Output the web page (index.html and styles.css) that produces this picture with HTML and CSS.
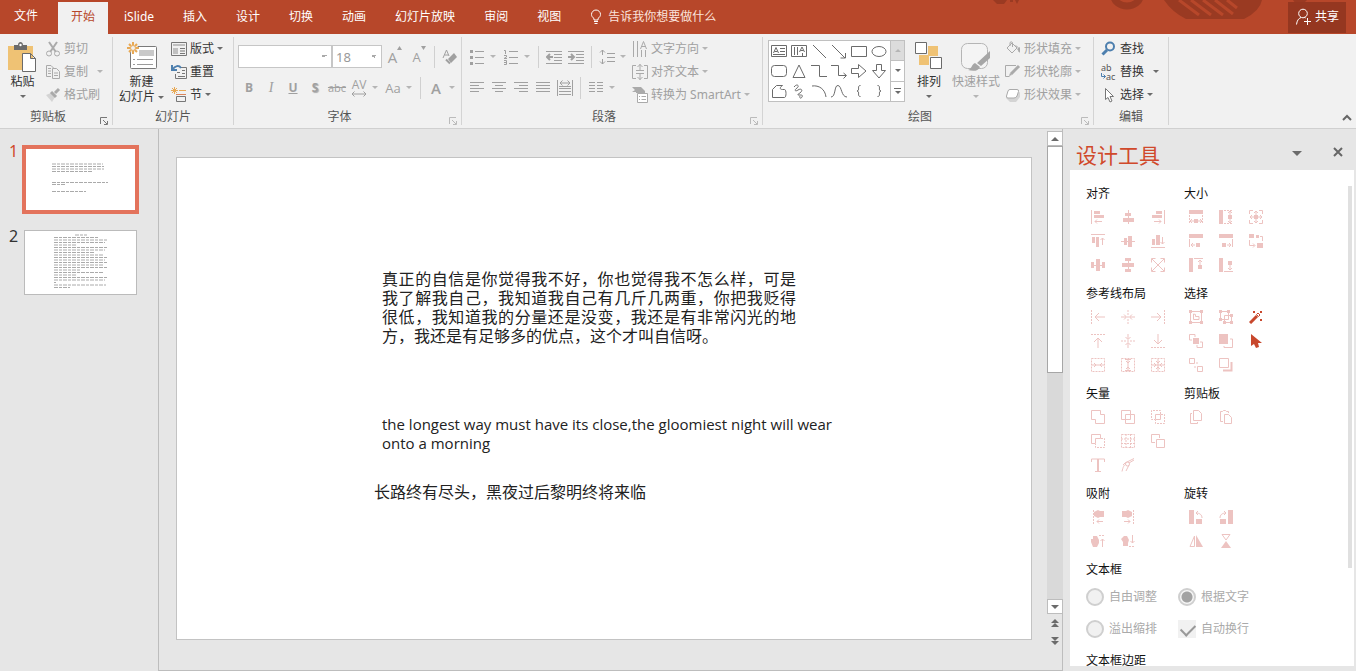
FILE: index.html
```html
<!DOCTYPE html>
<html lang="zh-CN">

<head>
    <meta charset="UTF-8">
    <meta name="viewport" content="width=device-width, initial-scale=1.0">
    <title>设计工具</title>
    <link rel="stylesheet" href="styles.css">
</head>

<body>
    <!-- Title tabs -->
    <header class="topbar">
        <svg class="topbar-art" width="320" height="20" viewBox="0 0 320 20" aria-hidden="true">
            <path d="M0 0h14l-3 4H4zM17 0h3v2h-3zM22 0h4l-2 4z" />
            <path class="ring" d="M121 -4a13 10 0 0 0 26 0" />
            <path d="M171 0q8 12 22 19h58q16-8 18-19z" />
            <path class="stripes" d="M186 0l20 15M198 0l20 15M210 0l20 15M222 0l18 14M234 0l10 8" />
            <path d="M300 0h14l-8 8z" />
        </svg>
        <nav class="tabs">
            <a class="tab file" href="#">文件</a>
            <a class="tab active" href="#">开始</a>
            <a class="tab" href="#">iSlide</a>
            <a class="tab" href="#">插入</a>
            <a class="tab" href="#">设计</a>
            <a class="tab" href="#">切换</a>
            <a class="tab" href="#">动画</a>
            <a class="tab" href="#">幻灯片放映</a>
            <a class="tab" href="#">审阅</a>
            <a class="tab" href="#">视图</a>
        </nav>
        <button class="tell-me">
            <svg width="12" height="16" viewBox="0 0 12 16"><path d="M4 11V9.500C2.500 8.500 1.500 7 1.500 5.500a4.500 4.500 0 0 1 9 0C10.500 7 9.500 8.500 8 9.500V11zM4 12.500h4M4.500 14.500h3" /></svg>
            告诉我你想要做什么
        </button>
        <button class="share">
            <svg width="17" height="18" viewBox="0 0 17 18"><path d="M1.500 16.500c.5-4 2-6 4.500-7M10.500 10c-.5-.5-1-.7-1.500-1M12.500 10v7M9 13.500h7" /><circle cx="8" cy="5.500" r="4.300" /></svg>
            共享
        </button>
    </header>

    <!-- Ribbon -->
    <div class="ribbon">
        <section class="group g-clipboard">
            <div class="group-body">
                <button class="big">
                    <svg width="29" height="32" viewBox="0 0 29 32">
                        <path fill="#efc274" d="M0 5h25v24H0z" />
                        <path fill="#6b6b6b" d="M6 4h4c0-4 5-4 5 0h4v5H6z" />
                        <path fill="#fff" stroke="#6b6b6b" d="M14.500 12.500h8l5 5v13h-13zM22.500 12.500v5h5" />
                        <circle cx="12.500" cy="4" r="1.200" fill="#fff" />
                    </svg>
                    <span>粘贴</span>
                    <i class="arrow"></i>
                </button>
                <div class="col">
                    <button class="small" disabled>
                        <svg viewBox="0 0 16 16"><path d="M4 1l6.500 9.500M12 1L5.500 10.500" stroke-width="2" /><circle cx="4" cy="12.500" r="2.500" /><circle cx="12" cy="12.500" r="2.500" /></svg>
                        剪切
                    </button>
                    <button class="small" disabled>
                        <svg viewBox="0 0 16 16"><path d="M6 12.500H1.500v-11H6L8.500 4M3 4.500h3M3 7h3M3 9.500h3M7.500 4.500h4l3 3v7h-7zM9 9h4M9 11.500h4" /></svg>
                        复制<i class="arrow wide"></i>
                    </button>
                    <button class="small" disabled>
                        <svg viewBox="0 0 16 16"><path class="f soft" d="M1 8l5-2 4 4-3 5z" /><path d="M6 5l5 5" stroke-width="3" /><path d="M10 6l4-4" stroke-width="3" /></svg>
                        格式刷
                    </button>
                </div>
            </div>
            <div class="group-foot"><span>剪贴板</span><button class="launcher" aria-label="剪贴板选项"><svg width="8" height="8" viewBox="0 0 8 8"><path d="M.5 7V.5H7M3 3l4 4M7.500 4v3.500H4" /></svg></button></div>
        </section>

        <section class="group g-slides">
            <div class="group-body">
                <button class="big">
                    <svg width="32" height="32" viewBox="0 0 32 32">
                        <rect x="4.500" y="5.500" width="26" height="22" rx="1" fill="#fff" stroke="#7a7a7a" />
                        <path fill="#c9c9c9" d="M13 9h15v6H13z" />
                        <path stroke="#9a9a9a" d="M7 18.500h2M11 18.500h16M7 23.500h2M11 23.500h16" />
                        <circle cx="7" cy="7" r="5" fill="#f1f1f1" />
                        <path stroke="#e8a955" stroke-width="2" d="M7 1v3M7 10v3M1 7h3M10 7h3M3 3l2 2M9 9l2 2M11 3L9 5M5 9l-2 2" />
                        <circle cx="7" cy="7" r="2.500" stroke="#e8a955" />
                    </svg>
                    <span>新建</span>
                    <span>幻灯片<i class="arrow"></i></span>
                </button>
                <div class="col">
                    <button class="small">
                        <svg viewBox="0 0 16 16"><path d="M.5 1.500h15v13H.5z" /><path class="f soft" d="M2 3h12v2H2zM2 7h5v6H2z" /><path d="M9 7.500h5M9 10h5M9 12.500h5" /></svg>
                        版式<i class="arrow"></i>
                    </button>
                    <button class="small">
                        <svg viewBox="0 0 16 16"><path d="M9 3.500h6.500v11h-11V10M6 8.500h3M11 6.500h3M11 9.500h3M7 12.500h7" /><path stroke="#4d7fae" stroke-width="2" d="M1 1v5h5M1.500 5.500C4 1.500 8 1 10 4" /></svg>
                        重置
                    </button>
                    <button class="small">
                        <svg viewBox="0 0 16 16"><path stroke="#e8a955" d="M3.500 0v7M0 3.500h7M1 1l5 5M6 1L1 6M8 3.500h7" /><path stroke="#d9845c" d="M5 7.500h10" /><path d="M5.500 9.500h9v5h-9z" /></svg>
                        节<i class="arrow"></i>
                    </button>
                </div>
            </div>
            <div class="group-foot"><span>幻灯片</span></div>
        </section>

        <section class="group g-font">
            <div class="group-body rows">
                <div class="row">
                    <select class="combo font-name" aria-label="字体" disabled><option></option></select>
                    <select class="combo font-size" aria-label="字号" disabled><option>18</option></select>
                    <button class="tool grow" aria-label="增大字号" disabled>A<svg width="5" height="4" viewBox="0 0 5 4"><path class="f" d="M0 4l2.500-4L5 4z" /></svg></button>
                    <button class="tool shrink" aria-label="减小字号" disabled>A<svg width="5" height="4" viewBox="0 0 5 4"><path class="f" d="M0 0l2.500 4L5 0z" /></svg></button>
                    <i class="bar"></i>
                    <button class="tool" aria-label="清除格式" disabled><svg width="16" height="16" viewBox="0 0 16 16"><path d="M1 9L4.500 1 7 7M2.500 6h4" /><path class="f" d="M6 10l6-6 3 4-6 6z" /><path d="M4 10.500l4 4" stroke-width="2" /></svg></button>
                </div>
                <div class="row">
                    <button class="tool b" disabled>B</button>
                    <button class="tool it" disabled>I</button>
                    <button class="tool u" disabled>U</button>
                    <button class="tool sh" disabled>S</button>
                    <button class="tool st" disabled>abc</button>
                    <button class="tool av" disabled><span>AV</span><svg width="16" height="6" viewBox="0 0 16 6"><path d="M1 3h14M3.500.5L1 3l2.500 2.500M12.500.5L15 3l-2.500 2.500" /></svg></button><i class="arrow"></i>
                    <button class="tool case" disabled>Aa</button><i class="arrow"></i>
                    <i class="bar"></i>
                    <button class="tool color" disabled>A</button><i class="arrow"></i>
                </div>
            </div>
            <div class="group-foot dim"><span>字体</span><button class="launcher" aria-label="字体选项"><svg width="8" height="8" viewBox="0 0 8 8"><path d="M.5 7V.5H7M3 3l4 4M7.500 4v3.500H4" /></svg></button></div>
        </section>

        <section class="group g-para">
            <div class="group-body">
                <div class="rows">
                    <div class="row">
                        <button class="tool" aria-label="项目符号" disabled><svg width="16" height="16" viewBox="0 0 16 16"><path class="f" d="M1 1h3v3H1zM1 7h3v3H1zM1 13h3v3H1z" /><path d="M6 2.500h9M6 8.500h9M6 14.500h9" /></svg></button><i class="arrow"></i>
                        <button class="tool" aria-label="编号" disabled><svg width="16" height="16" viewBox="0 0 16 16"><path d="M1 1.500h1.500V5M1 6.500h2.500v1.500L1 9.500h3M1 11.500h2.500v4H1M1 13.500h2M6 2.500h9M6 8.500h9M6 14.500h9" /></svg></button><i class="arrow"></i>
                        <i class="bar"></i>
                        <button class="tool" aria-label="减少缩进" disabled><svg width="16" height="16" viewBox="0 0 16 16"><path d="M0 2.500h16M8 5.500h8M8 8.500h8M8 11.500h8M0 14.500h16" /><path d="M7 8H1M4 5L1 8l3 3" stroke-width="2" /></svg></button>
                        <button class="tool" aria-label="增加缩进" disabled><svg width="16" height="16" viewBox="0 0 16 16"><path d="M0 2.500h16M8 5.500h8M8 8.500h8M8 11.500h8M0 14.500h16" /><path d="M0 8h6M3 5l3 3-3 3" stroke-width="2" /></svg></button>
                        <i class="bar"></i>
                        <button class="tool" aria-label="行距" disabled><svg width="16" height="16" viewBox="0 0 16 16"><path d="M3.500 1v5M1 3.500L3.500 1 6 3.500M3.500 10v5M1 12.500L3.500 15 6 12.500M8 4.500h8M8 8.500h8M8 12.500h8" /></svg></button><i class="arrow"></i>
                    </div>
                    <div class="row">
                        <button class="tool" aria-label="左对齐" disabled><svg width="16" height="14" viewBox="0 0 16 14"><path d="M1 1.500h14M1 4.500h9M1 7.500h14M1 10.500h9" /></svg></button>
                        <button class="tool" aria-label="居中" disabled><svg width="16" height="14" viewBox="0 0 16 14"><path d="M1 1.500h14M4 4.500h8M1 7.500h14M4 10.500h8" /></svg></button>
                        <button class="tool" aria-label="右对齐" disabled><svg width="16" height="14" viewBox="0 0 16 14"><path d="M1 1.500h14M6 4.500h9M1 7.500h14M6 10.500h9" /></svg></button>
                        <button class="tool" aria-label="两端对齐" disabled><svg width="16" height="14" viewBox="0 0 16 14"><path d="M1 1.500h14M1 4.500h14M1 7.500h14M1 10.500h14" /></svg></button>
                        <button class="tool" aria-label="分散对齐" disabled><svg width="16" height="16" viewBox="0 0 16 16"><path d="M.5 0v16M15.500 0v16M3 3h10M5.500.5L3 3l2.500 2.500M10.500.5L13 3l-2.500 2.500M2 6.500h12M2 8.500h12M2 11.500h12M2 14.500h12" /></svg></button>
                        <i class="bar"></i>
                        <button class="tool" aria-label="分栏" disabled><svg width="16" height="14" viewBox="0 0 16 14"><path d="M1 1.500h6M9 1.500h6M1 4.500h6M9 4.500h6M1 7.500h6M9 7.500h6M1 10.500h6M9 10.500h6" /></svg></button><i class="arrow"></i>
                    </div>
                </div>
                <div class="col">
                    <button class="small" disabled>
                        <svg viewBox="0 0 16 16"><path d="M1.500 0v16M5.500 0v16M9.500 9v7M13.500 9v7M8.500 8L11.500.5 14.500 8M9.500 5.500h4" /></svg>
                        文字方向<i class="arrow"></i>
                    </button>
                    <button class="small" disabled>
                        <svg viewBox="0 0 16 16"><path d="M4 1.500H.5v13H4M12 1.500h3.500v13H12M8 0v6M5.500 3L8 .5 10.500 3M8 10v6M5.500 13L8 15.500l2.500-2.500M4 6.500h8M4 9.500h8" /></svg>
                        对齐文本<i class="arrow"></i>
                    </button>
                    <button class="small" disabled>
                        <svg viewBox="0 0 16 16"><path class="f" d="M0 0h9l4 4v2H4V5H0l3-2z" /><path class="w" d="M5.500 6.500h10v9h-10z" /><path d="M7 9.500h1M9.500 9.500H14M7 12.500h1M9.500 12.500H14" /></svg>
                        转换为 SmartArt<i class="arrow"></i>
                    </button>
                </div>
            </div>
            <div class="group-foot dim"><span>段落</span><button class="launcher" aria-label="段落选项"><svg width="8" height="8" viewBox="0 0 8 8"><path d="M.5 7V.5H7M3 3l4 4M7.500 4v3.500H4" /></svg></button></div>
        </section>

        <section class="group g-draw">
            <div class="group-body">
                <div class="gallery">
                    <div class="shapes">
                        <button aria-label="文本框"><svg viewBox="0 0 16 16"><path d="M.5 2.500h15v11H.5zM2.500 10L5 4.500 7.500 10M3.500 8.500h3M9 5.500h5M9 8.500h5M2 11.500h12" /></svg></button>
                        <button aria-label="竖排文本框"><svg viewBox="0 0 16 16"><path d="M.5 2.500h15v11H.5zM3.500 4v8M6.500 4v8M8.500 9L11 4l2.500 5M9.500 7.500h3M11.500 10v3" /></svg></button>
                        <button aria-label="直线"><svg viewBox="0 0 16 16"><path d="M2 2l13 13" /></svg></button>
                        <button aria-label="箭头"><svg viewBox="0 0 16 16"><path d="M1 2l13 13M14.500 10v5h-5" /></svg></button>
                        <button aria-label="矩形"><svg viewBox="0 0 16 16"><path d="M.5 3.500h15v10H.5z" /></svg></button>
                        <button aria-label="椭圆"><svg viewBox="0 0 16 16"><ellipse cx="8" cy="8.500" rx="7" ry="5" /></svg></button>
                        <button aria-label="圆角矩形"><svg viewBox="0 0 16 16"><rect x=".5" y="2.500" width="15" height="11" rx="3" /></svg></button>
                        <button aria-label="三角形"><svg viewBox="0 0 16 16"><path d="M8 2L2 14.500h12z" /></svg></button>
                        <button aria-label="肘形"><svg viewBox="0 0 16 16"><path d="M0 2.500h8.500v11H16" /></svg></button>
                        <button aria-label="肘形箭头"><svg viewBox="0 0 16 16"><path d="M0 2.500h7.500v10H15M12.500 10l3 2.500-3 3" /></svg></button>
                        <button aria-label="右箭头"><svg viewBox="0 0 16 16"><path d="M.5 5.500h7V1.500L15 8l-7.500 6.500v-4h-7z" /></svg></button>
                        <button aria-label="下箭头"><svg viewBox="0 0 16 16"><path d="M5.500 1.500h5v6h4L8 15 1.500 7.500h4z" /></svg></button>
                        <button aria-label="任意多边形"><svg viewBox="0 0 16 16"><path d="M1.500 14.500V6.500l4-4h6c-3 2-3 4 0 4h2c2 0 2 8 0 8z" /></svg></button>
                        <button aria-label="曲线笔"><svg viewBox="0 0 16 16"><path d="M3 4c3-4 6-1 3 1S4 9 7 7s5 0 3 2-5 3-2 3 4 0 3 2-3 1-2-1" /></svg></button>
                        <button aria-label="弧形"><svg viewBox="0 0 16 16"><path d="M1 3c7-1 13 3 14 11" /></svg></button>
                        <button aria-label="曲线"><svg viewBox="0 0 16 16"><path d="M0 14C5 14 3 2 7 2.500S10 14 16 14" /></svg></button>
                        <button aria-label="左大括号"><svg viewBox="0 0 16 16"><path d="M9.500 2.500c-4 0 0 5-3.500 5.500 3.500.5-.5 5.500 3.500 5.500" /></svg></button>
                        <button aria-label="右大括号"><svg viewBox="0 0 16 16"><path d="M6.500 2.500c4 0 0 5 3.500 5.500-3.500.5.500 5.500-3.500 5.500" /></svg></button>
                    </div>
                    <div class="gallery-nav">
                        <button aria-label="上一行" disabled><i class="arrow up"></i></button>
                        <button aria-label="下一行"><i class="arrow"></i></button>
                        <button class="more" aria-label="更多"><i class="arrow"></i></button>
                    </div>
                </div>
                <button class="big arrange">
                    <svg width="28" height="32" viewBox="0 0 28 32">
                        <path fill="#efc274" d="M13 5h10v10H13zM4 14h10v10H4z" />
                        <path fill="#fff" stroke="#6b6b6b" d="M.5 1.500h11v11H.5zM15.500 16.500h11v11h-11z" />
                    </svg>
                    <span>排列</span>
                    <i class="arrow"></i>
                </button>
                <button class="big" disabled>
                    <svg width="30" height="32" viewBox="0 0 30 32">
                        <rect x=".5" y="2.500" width="26" height="25" rx="6" fill="#f4f4f4" stroke="#b5b5b5" />
                        <path fill="#a6a6a6" d="M29 10v7l-9 8-4-3zM14 22l5 4c-2 5-8 4-12 3 4-1 3-5 7-7z" />
                    </svg>
                    <span>快速样式</span>
                    <i class="arrow"></i>
                </button>
                <div class="col">
                    <button class="small" disabled>
                        <svg viewBox="0 0 16 16"><path d="M2 7l5-5 5 5-5 5zM5 5V1.500Q6 0 7.500 1.500V6M10 5c3 0 4 2 4 6" /><path class="f" d="M12 8l3-2v6z" /></svg>
                        形状填充<i class="arrow"></i>
                    </button>
                    <button class="small" disabled>
                        <svg viewBox="0 0 16 16"><path d="M11 1.500H.5v11h4" /><path d="M14 2L6 10" stroke-width="3" /><path class="f" d="M5 9l2 2-3 1z" /></svg>
                        形状轮廓<i class="arrow"></i>
                    </button>
                    <button class="small" disabled>
                        <svg viewBox="0 0 16 16"><path class="f soft" d="M1 11l4 4h6l4-5V5z" /><path class="w" d="M5 2.500h7q2 0 1.500 2L12 9q-1 2-3 2H3q-2 0-1.500-2L3 4q.5-1.500 2-1.500z" /></svg>
                        形状效果<i class="arrow"></i>
                    </button>
                </div>
            </div>
            <div class="group-foot dim"><span>绘图</span><button class="launcher" aria-label="绘图选项"><svg width="8" height="8" viewBox="0 0 8 8"><path d="M.5 7V.5H7M3 3l4 4M7.500 4v3.500H4" /></svg></button></div>
        </section>

        <section class="group g-edit">
            <div class="group-body">
                <div class="col">
                    <button class="small">
                        <svg viewBox="0 0 16 16"><circle cx="9" cy="5.500" r="4" stroke="#4d7fae" stroke-width="2" /><path stroke="#4d7fae" stroke-width="3" d="M6 9l-4.500 4.500" /></svg>
                        查找
                    </button>
                    <button class="small">
                        <span class="replace-icon">
                            <span>ab</span>
                            <span><svg width="5" height="6" viewBox="0 0 5 6"><path stroke="#4d7fae" d="M.5 0v3.500h4M2.500 1.500l2 2-2 2" /></svg>ac</span>
                        </span>
                        替换<i class="arrow wide"></i>
                    </button>
                    <button class="small">
                        <svg viewBox="0 0 16 16"><path class="w" d="M4.500 1.500v11l2.500-2 2 4.500 2-1-2-4.500h3.500z" /></svg>
                        选择<i class="arrow"></i>
                    </button>
                </div>
            </div>
            <div class="group-foot"><span>编辑</span></div>
        </section>
        <button class="collapse" aria-label="折叠功能区"><svg width="10" height="7" viewBox="0 0 10 7"><path d="M1 6l4-4 4 4" /></svg></button>
    </div>

    <main class="workspace">
        <!-- Slide thumbnails -->
        <aside class="thumbs">
            <a class="thumb active" href="#slide">
                <span>1</span>
                <svg viewBox="0 0 109 61">
                    <path d="M26 15h51M26 17.500h52M26 20h52M26 22.500h41M26 33.500h56M26 35.500h14M26 42.500h34" />
                </svg>
            </a>
            <a class="thumb" href="#slide">
                <span>2</span>
                <svg viewBox="0 0 111 63">
                    <path d="M50 4h12M29 6.500h44M29 9h53M29 11.500h51M29 14h22M29 16.500h53M29 19h51M29 21.500h40M29 24h50M29 26.500h53M29 29h51M29 31.500h53M29 34h49M29 36.500h53M29 39h27M29 41.500h50M29 44h22M29 46.500h53M29 49h51M29 51.500h2M29 54h52M29 56.500h16" />
                </svg>
            </a>
        </aside>

        <!-- Editing area -->
        <div class="canvas">
            <article class="slide" id="slide">
                <p class="quote">真正的自信是你觉得我不好，你也觉得我不怎么样，可是我了解我自己，我知道我自己有几斤几两重，你把我贬得很低，我知道我的分量还是没变，我还是有非常闪光的地方，我还是有足够多的优点，这个才叫自信呀。</p>
                <p class="english">the longest way must have its close,the gloomiest night will wear onto a morning</p>
                <p class="chinese">长路终有尽头，黑夜过后黎明终将来临</p>
            </article>
            <div class="scroll">
                <button aria-label="向上滚动"><i class="arrow up"></i></button>
                <div class="track"><div class="handle"></div></div>
                <button aria-label="向下滚动"><i class="arrow"></i></button>
                <button class="jump" aria-label="上一张幻灯片"><svg width="8" height="8" viewBox="0 0 8 8"><path d="M0 4l4-4 4 4zM0 8l4-4 4 4z" /></svg></button>
                <button class="jump" aria-label="下一张幻灯片"><svg width="8" height="8" viewBox="0 0 8 8"><path d="M0 0h8L4 4zM0 4h8L4 8z" /></svg></button>
            </div>
        </div>

        <!-- Design tools -->
        <aside class="pane">
            <div class="pane-head">
                <h1>设计工具</h1>
                <button aria-label="任务窗格选项"><i class="arrow large"></i></button>
                <button aria-label="关闭"><svg width="10" height="10" viewBox="0 0 10 10"><path d="M1 1l8 8M9 1L1 9" /></svg></button>
            </div>
            <div class="pane-body">
                <div class="pane-content">
                    <div class="sets">
                        <section class="set">
                            <h2>对齐</h2>
                            <div class="icons">
                                <button aria-label="左对齐" disabled><svg viewBox="0 0 14 14"><path class="f" d="M3 1h6v3H3zM3 5h10v3H3z" /><path d="M.5 0v14M11 11.500H4M6 9.500l-2 2 2 2" /></svg></button>
                                <button aria-label="水平居中" disabled><svg viewBox="0 0 14 14"><path class="f" d="M4 3h6v3H4zM2 8h11v4H2z" /><path d="M7.500 0v14" /></svg></button>
                                <button aria-label="右对齐" disabled><svg viewBox="0 0 14 14"><path class="f" d="M5 1h6v3H5zM1 5h10v3H1z" /><path d="M13.500 0v14M3 11.500h7M8 9.500l2 2-2 2" /></svg></button>
                                <button aria-label="顶端对齐" disabled><svg viewBox="0 0 14 14"><path class="f" d="M1 3h3v6H1zM5 3h3v10H5z" /><path d="M0 .5h14M11.500 11V4M9.500 6l2-2 2 2" /></svg></button>
                                <button aria-label="垂直居中" disabled><svg viewBox="0 0 14 14"><path class="f" d="M3 4h3v7H3zM7 2h4v11H7z" /><path d="M0 7.500h14" /></svg></button>
                                <button aria-label="底端对齐" disabled><svg viewBox="0 0 14 14"><path class="f" d="M1 5h3v6H1zM5 1h4v10H5z" /><path d="M0 13.500h14M11.500 3v7M9.500 8l2 2 2-2" /></svg></button>
                                <button aria-label="横向分布" disabled><svg viewBox="0 0 14 14"><path class="f" d="M0 4h3v6H0zM5 1h4v12H5zM11 4h3v6h-3z" /><path d="M0 7.500h14" /></svg></button>
                                <button aria-label="纵向分布" disabled><svg viewBox="0 0 14 14"><path class="f" d="M4 0h6v3H4zM1 5h12v4H1zM4 11h6v3H4z" /><path d="M7.500 0v14" /></svg></button>
                                <button aria-label="铺满" disabled><svg viewBox="0 0 14 14"><path d="M1 1l12 12M13 1L1 13M.5 4.500v-4h4M9.500.5h4v4M13.500 9.500v4h-4M4.500 13.500h-4v-4" /></svg></button>
                            </div>
                        </section>
                        <section class="set">
                            <h2>大小</h2>
                            <div class="icons">
                                <button aria-label="等宽" disabled><svg viewBox="0 0 14 14"><path class="f" d="M0 0h14v4H0zM5 9h4v4H5z" /><path class="d" d="M.5 5v8M13.500 5v8" /><path d="M5 11H1M3 9l-2 2 2 2M9 11h4M11 9l2 2-2 2" /></svg></button>
                                <button aria-label="等高" disabled><svg viewBox="0 0 14 14"><path class="f" d="M0 0h4v14H0zM9 5h4v4H9z" /><path class="d" d="M5 .5h9M5 13.500h9" /><path d="M11 5V1M9 3l2-2 2 2M11 9v4M9 11l2 2 2-2" /></svg></button>
                                <button aria-label="等大小" disabled><svg viewBox="0 0 14 14"><path d="M.5 4V.5H4M10 .5h3.500V4M13.500 10v3.500H10M4 13.500H.5V10M1 7h12M7 1v12M3 5L1 7l2 2M11 5l2 2-2 2M5 3l2-2 2 2M5 11l2 2 2-2" /><path class="f" d="M5 5h4v4H5z" /></svg></button>
                                <button aria-label="向左等宽" disabled><svg viewBox="0 0 14 14"><path class="f" d="M0 0h14v4H0zM7 9h4v4H7z" /><path d="M.5 5v8M6 11H2M4 9l-2 2 2 2" /></svg></button>
                                <button aria-label="向右等宽" disabled><svg viewBox="0 0 14 14"><path class="f" d="M0 0h14v4H0zM3 9h4v4H3z" /><path d="M13.500 5v8M8 11h4M10 9l2 2-2 2" /></svg></button>
                                <button aria-label="交换" disabled><svg viewBox="0 0 14 14"><path class="f" d="M0 0h5v4H0zM8 9h6v5H8zM7 1h3v3H7z" /><path d="M.5 6v5.500h5M4 9.500l2 2-2 2M11 2.500h2.500V7" /></svg></button>
                                <button aria-label="向上等高" disabled><svg viewBox="0 0 14 14"><path class="f" d="M0 0h4v14H0zM9 7h4v4H9z" /><path d="M5 .5h9M11 7V2M9 4l2-2 2 2" /></svg></button>
                                <button aria-label="向下等高" disabled><svg viewBox="0 0 14 14"><path class="f" d="M0 0h4v14H0zM9 3h4v4H9z" /><path d="M5 13.500h9M11 7v5M9 10l2 2 2-2" /></svg></button>
                            </div>
                        </section>
                        <section class="set">
                            <h2>参考线布局</h2>
                            <div class="icons">
                                <button aria-label="左参考线" disabled><svg viewBox="0 0 14 14"><path d="M14 7H4M8 3L4 7l4 4" /><path class="d" d="M.5 0v14" /></svg></button>
                                <button aria-label="垂直中线" disabled><svg viewBox="0 0 14 14"><path d="M0 7h5M3 4.500L5.500 7 3 9.500M14 7H9M11 4.500L8.500 7 11 9.500" /><path class="d" d="M7 0v14" /></svg></button>
                                <button aria-label="右参考线" disabled><svg viewBox="0 0 14 14"><path d="M0 7h10M6 3l4 4-4 4" /><path class="d" d="M13.500 0v14" /></svg></button>
                                <button aria-label="上参考线" disabled><svg viewBox="0 0 14 14"><path d="M7 14V4M3 8l4-4 4 4" /><path class="d" d="M0 .5h14" /></svg></button>
                                <button aria-label="水平中线" disabled><svg viewBox="0 0 14 14"><path d="M7 0v5M4.500 3L7 5.500 9.500 3M7 14V9M4.500 11L7 8.500 9.500 11" /><path class="d" d="M0 7h14" /></svg></button>
                                <button aria-label="下参考线" disabled><svg viewBox="0 0 14 14"><path d="M7 0v10M3 6l4 4 4-4" /><path class="d" d="M0 13.500h14" /></svg></button>
                                <button aria-label="左右边距" disabled><svg viewBox="0 0 14 14"><path class="d" d="M.5.5h13v13H.5z" /><path d="M1 7h12M3 5l2 2-2 2M11 5L9 7l2 2" /></svg></button>
                                <button aria-label="上下边距" disabled><svg viewBox="0 0 14 14"><path class="d" d="M.5.5h13v13H.5z" /><path d="M7 1v12M5 3l2 2 2-2M5 11l2-2 2 2M4 1.500h6M4 12.500h6" /></svg></button>
                                <button aria-label="四周边距" disabled><svg viewBox="0 0 14 14"><path class="d" d="M.5.500h13v13H.5z" /><path d="M1 7h12M7 1v12M5 3l2 2 2-2M5 11l2-2 2 2M3 5l2 2-2 2M11 5L9 7l2 2" /></svg></button>
                            </div>
                        </section>
                        <section class="set">
                            <h2>选择</h2>
                            <div class="icons">
                                <button aria-label="组合" disabled><svg viewBox="0 0 14 14"><path d="M1.500 1.500h11v11h-11zM4.500 4v5.500H10V6.500H6.500V4.500z" /><path class="f" d="M0 0h3v3H0zM11 0h3v3h-3zM0 11h3v3H0zM11 11h3v3h-3z" /></svg></button>
                                <button aria-label="取消组合" disabled><svg viewBox="0 0 14 14"><path d="M1.500 1.500h8v8h-8zM5.500 5.500h7v7h-7z" /><path class="f" d="M0 0h3v3H0zM8 0h3v3H8zM0 8h3v3H0zM11 4h3v3h-3zM4 11h3v3H4zM11 11h3v3h-3z" /></svg></button>
                                <button class="live" aria-label="魔棒"><svg viewBox="0 0 14 14"><path stroke-width="3" d="M1 13l7-7" /><path d="M7.500 4.500l2 2L11 5 9 3zM4 1l2 2M6 1L4 3M11 1l2 2M13 1l-2 2M11 9l2 2M13 9l-2 2" /></svg></button>
                                <button aria-label="上移一层" disabled><svg viewBox="0 0 14 14"><path class="f" d="M4 4h6v6H4z" /><path d="M3 6H.5V.5H6V3M11 8h2.500v5.500H8V11" /></svg></button>
                                <button aria-label="置于顶层" disabled><svg viewBox="0 0 14 14"><path class="f" d="M0 0h9v10H0z" /><path d="M11 5h2.500v8.500H5V12" /></svg></button>
                                <button class="live" aria-label="选择"><svg viewBox="0 0 14 14"><path class="f" d="M2 0v12l3-2 2 4 3-1-1-4h4z" /></svg></button>
                                <button aria-label="下移一层" disabled><svg viewBox="0 0 14 14"><path d="M.5.500h5v5h-5zM8.500 8.500h5v5h-5zM8 4v2M5 9h2" /></svg></button>
                                <button aria-label="置于底层" disabled><svg viewBox="0 0 14 14"><path d="M.5.500h9v9h-9z" /><path d="M12.500 4v8.500H4" stroke-width="2" /></svg></button>
                            </div>
                        </section>
                        <section class="set">
                            <h2>矢量</h2>
                            <div class="icons">
                                <button aria-label="联合" disabled><svg viewBox="0 0 14 14"><path d="M.5.500h9v4h4v9h-9v-4h-4z" /></svg></button>
                                <button aria-label="组合形状" disabled><svg viewBox="0 0 14 14"><path d="M.5.500h9v9h-9zM4.500 4.500h9v9h-9z" /></svg></button>
                                <button aria-label="相交" disabled><svg viewBox="0 0 14 14"><path d="M4.500 4.500h5v5h-5z" /><path class="d" d="M9.500 4V.5h-9v9H4M10 4.500h3.500v9h-9V10" /></svg></button>
                                <button aria-label="剪除" disabled><svg viewBox="0 0 14 14"><path d="M9.500 4.500v-4h-9v9h4v-5z" /><path class="d" d="M10 4.500h3.500v9h-9V10" /></svg></button>
                                <button aria-label="拆分" disabled><svg viewBox="0 0 14 14"><path class="d" d="M.5.500h13v13H.5zM5 0v14M9.500 0v14M0 5h14M0 9.500h14" /></svg></button>
                                <button aria-label="反向剪除" disabled><svg viewBox="0 0 14 14"><path d="M5.500 5.500h8v8h-8zM4 8.500H.5v-8h8V4" /></svg></button>
                                <button aria-label="文字矢量化" disabled><svg viewBox="0 0 14 14"><path d="M.5 4V1h13v3M4 13.500h6" /><path stroke-width="2" d="M7 1v12" /></svg></button>
                                <button aria-label="编辑顶点" disabled><svg viewBox="0 0 14 14"><path d="M1 13.500C2 9 3 7 5 6M8 5l5-3M2 7l2-2 9-4.500M5 13l3-6" /><circle cx="6.500" cy="6" r="2" /></svg></button>
                            </div>
                        </section>
                        <section class="set">
                            <h2>剪贴板</h2>
                            <div class="icons">
                                <button aria-label="复制" disabled><svg viewBox="0 0 14 14"><path d="M4.500.500h5l3 3v7h-8z" /><path d="M3 3.500H1.500v10h7V12" /></svg></button>
                                <button aria-label="粘贴" disabled><svg viewBox="0 0 14 14"><path d="M5.500 4.500h4l3 3v6h-7z" /><path d="M4 11.500H1.500V1.500h2l1-1h2l1 1h2V3" /></svg></button>
                            </div>
                        </section>
                        <section class="set">
                            <h2>吸附</h2>
                            <div class="icons pair">
                                <button aria-label="向左吸附" disabled><svg viewBox="0 0 14 14"><path class="f" d="M3 2l4-2 2 1h4v6h-4L7 8 3 6z" /><path class="d" d="M2.500 0v14" /><path d="M12 11.500H6M8 9.500l-2 2 2 2" /></svg></button>
                                <button aria-label="向右吸附" disabled><svg viewBox="0 0 14 14"><path class="f" d="M11 2L7 0 5 1H1v6h4l2 1 4-2z" /><path class="d" d="M12.500 0v14" /><path d="M3 11.500h6M7 9.500l2 2-2 2" /></svg></button>
                                <button aria-label="向上吸附" disabled><svg viewBox="0 0 14 14"><path class="f" d="M2 2h4l2 4v3l-2 4H2L0 8V5h2z" /><path d="M11.500 13V5M9.500 7l2-2 2 2" /><path class="d" d="M8 1.500h6" /></svg></button>
                                <button aria-label="向下吸附" disabled><svg viewBox="0 0 14 14"><path class="f" d="M2 12h5V9l1-3-2-4H3L0 5l2 3z" /><path d="M11.500 1v8M9.500 7l2 2 2-2" /><path class="d" d="M8 12.500h6" /></svg></button>
                            </div>
                        </section>
                        <section class="set">
                            <h2>旋转</h2>
                            <div class="icons pair">
                                <button aria-label="向左旋转" disabled><svg viewBox="0 0 14 14"><path class="f" d="M0 0h5v14H0zM7 9h6v5H7z" /><path d="M7 3c4 0 6 2 6 5M9 1L7 3l2 2" /></svg></button>
                                <button aria-label="向右旋转" disabled><svg viewBox="0 0 14 14"><path class="f" d="M9 0h5v14H9zM1 9h6v5H1z" /><path d="M7 3C3 3 1 5 1 8M5 1l2 2-2 2" /></svg></button>
                                <button aria-label="水平翻转" disabled><svg viewBox="0 0 14 14"><path d="M5.500 2v10.500H1z" /><path class="f" d="M7 1l7 12H7z" /></svg></button>
                                <button aria-label="垂直翻转" disabled><svg viewBox="0 0 14 14"><path d="M3 .5h8L7 6z" /><path class="f" d="M7 7l5 7H2z" /></svg></button>
                            </div>
                        </section>
                    </div>
                    <h2>文本框</h2>
                    <div class="options">
                        <label><input type="radio" name="fit" disabled>自由调整</label>
                        <label><input type="radio" name="fit" checked disabled>根据文字</label>
                        <label><input type="radio" name="fit" disabled>溢出缩排</label>
                        <label><input type="checkbox" checked disabled>自动换行</label>
                    </div>
                    <h2>文本框边距</h2>
                </div>
                <div class="pane-scroll"></div>
            </div>
        </aside>
    </main>
</body>

</html>
```

FILE: styles.css
```css
* {
    box-sizing: border-box;
}

body {
    margin: 0;
    height: 100vh;
    display: flex;
    flex-direction: column;
    overflow: hidden;
    background: #e6e6e6;
    color: #333;
    font-family: "Noto Sans", "Noto Sans CJK SC", sans-serif;
    font-size: 12px;
    line-height: 16px;
}

h1,
h2,
p {
    margin: 0;
    font-weight: normal;
}

a {
    color: inherit;
    text-decoration: none;
}

button {
    margin: 0;
    padding: 0;
    border: none;
    background: none;
    color: inherit;
    font: inherit;
    white-space: nowrap;
}

button:disabled {
    color: #a0a0a0;
}

svg {
    flex: none;
    fill: none;
}

.f {
    fill: currentColor;
    stroke: none;
}

.soft {
    opacity: 0.4;
}

.w {
    fill: #fff;
}

/* Top bar */
.topbar {
    position: relative;
    flex: none;
    display: flex;
    align-items: center;
    height: 34px;
    background: #b7472a;
    color: #fff;
}

.topbar-art {
    position: absolute;
    top: 0;
    right: 43px;
    fill: #9a3a22;
}

.topbar-art .ring {
    fill: none;
    stroke: #9a3a22;
    stroke-width: 7;
}

.topbar-art .stripes {
    stroke: #b7472a;
    stroke-width: 3;
}

.tabs {
    display: flex;
    gap: 3px;
    align-self: stretch;
    padding-top: 2px;
}

.tab {
    padding: 0 13px;
    line-height: 30px;
}

.tab.file {
    width: 55px;
    padding-left: 14px;
    line-height: 28px;
}

.tab.active {
    background: #f1f1f1;
    color: #b7472a;
}

.tell-me {
    display: flex;
    align-items: center;
    gap: 6px;
    margin-left: 16px;
    color: #fbe3dc;
}

.tell-me svg,
.share svg {
    stroke: #fff;
}

.share {
    position: relative;
    display: flex;
    align-items: center;
    justify-content: center;
    gap: 3px;
    width: 58px;
    height: 31px;
    margin: 0 10px 0 auto;
    background: #953720;
}

/* Ribbon */
.ribbon {
    flex: none;
    display: flex;
    height: 95px;
    padding: 3px 0;
    background: #f1f1f1;
    border-bottom: 1px solid #d0d0d0;
}

.ribbon svg {
    stroke: currentColor;
}

.ribbon .big svg {
    stroke: none;
}

.group {
    display: flex;
    flex-direction: column;
    border-right: 1px solid #d4d4d4;
}

.g-clipboard {
    width: 113px;
}

.g-slides {
    width: 121px;
}

.g-font {
    width: 228px;
}

.g-para {
    width: 301px;
}

.g-draw {
    width: 331px;
}

.g-edit {
    width: 75px;
}

.group-body {
    flex: 1;
    display: flex;
    padding-left: 4px;
}

.group-foot {
    display: flex;
    align-items: flex-end;
    height: 16px;
    color: #555;
}

.group-foot span {
    flex: 1;
    text-align: center;
}

.launcher {
    display: flex;
    align-items: flex-end;
    width: 16px;
    height: 14px;
    padding-left: 4px;
}

.launcher svg {
    color: #777;
}

.dim .launcher svg {
    color: #bbb;
}

.arrow {
    flex: none;
    display: inline-block;
    border: 3px solid transparent;
    border-top-color: currentColor;
    border-bottom: none;
    color: #6b6b6b;
    vertical-align: middle;
}

.arrow.up {
    border-top: none;
    border-bottom: 3px solid currentColor;
}

.arrow.large {
    border-width: 5px;
    border-bottom: none;
}

button:disabled .arrow,
.row .arrow {
    color: #b5b5b5;
}

.big {
    display: flex;
    flex-direction: column;
    align-items: center;
    padding-top: 4px;
    line-height: 15px;
    color: #333;
}

.big svg {
    margin-bottom: 1px;
}

.big .arrow {
    margin: 6px 0 0;
}

.big span .arrow {
    margin: 0 0 0 3px;
}

.g-clipboard .big {
    padding-right: 8px;
    margin-left: 4px;
}

.g-slides .big {
    padding-right: 7px;
    margin-left: 2px;
}

.col {
    display: flex;
    flex-direction: column;
}

.small {
    display: flex;
    align-items: center;
    gap: 3px;
    height: 23px;
}

.small > svg {
    width: 16px;
    height: 16px;
    color: #777;
}

.small:disabled > svg {
    color: #aaa;
}

.small .arrow.wide {
    margin-left: 6px;
}

.replace-icon {
    display: flex;
    flex-direction: column;
    width: 16px;
    color: #555;
    font-size: 9px;
    line-height: 9px;
    text-align: left;
}

.replace-icon span {
    display: flex;
    align-items: center;
}

.rows {
    display: flex;
    flex-direction: column;
    padding-top: 4px;
}

.row {
    display: flex;
    align-items: center;
    height: 31px;
}

.row .arrow {
    margin: 0 4px 0 2px;
}

.bar {
    width: 1px;
    height: 22px;
    margin: 0 4px;
    background: #d0d0d0;
}

.tool {
    display: flex;
    align-items: center;
    justify-content: center;
    width: 22px;
    height: 22px;
    font-family: "Open Sans", "Noto Sans", sans-serif;
}

/* the two gradients make the drop-down triangle */
.combo {
    appearance: none;
    height: 23px;
    margin: 0;
    padding: 0 3px;
    border: 1px solid #c6c6c6;
    border-radius: 0;
    background-color: #fff;
    background-image: linear-gradient(to bottom left, #aaa 50%, transparent 50%), linear-gradient(to bottom right, #aaa 50%, transparent 50%);
    background-position: right 7px center, right 4px center;
    background-size: 3px 3px;
    background-repeat: no-repeat;
    color: #999;
    font: 13px "Noto Sans", sans-serif;
    opacity: 1;
}

.font-name {
    width: 94px;
}

.font-size {
    width: 50px;
}

.tool.grow {
    width: 26px;
    font-size: 15px;
}

.tool.shrink {
    font-size: 13px;
}

.tool.grow svg,
.tool.shrink svg {
    align-self: flex-start;
    stroke: none;
}

.tool.b,
.tool.u,
.tool.sh {
    font-weight: bold;
}

.tool.u {
    text-decoration: underline;
}

.tool.it {
    font-family: "Liberation Serif", serif;
    font-size: 14px;
    font-style: italic;
}

.tool.sh {
    text-shadow: 1px 1px 1px #aaa;
}

.tool.st {
    text-decoration: line-through;
    font-size: 11px;
}

.tool.av {
    flex-direction: column;
    line-height: 12px;
}

.tool.case {
    font-size: 13px;
}

.tool.color {
    font-size: 15px;
    font-weight: 600;
}

.g-para .rows {
    width: 166px;
}

/* Shape gallery */
.gallery {
    display: flex;
    height: 62px;
    margin: 3px 10px 0 1px;
    background: #fff;
    border: 1px solid #c0c0c0;
}

.shapes {
    display: grid;
    grid-template-columns: repeat(6, 20px);
    padding-right: 1px;
}

.shapes button {
    display: flex;
    align-items: center;
    justify-content: center;
    color: #6b6b6b;
}

.shapes svg {
    width: 16px;
    height: 16px;
}

.gallery-nav {
    display: flex;
    flex-direction: column;
    width: 14px;
    border-left: 1px solid #c0c0c0;
}

.gallery-nav button {
    flex: 1;
    display: flex;
    flex-direction: column;
    align-items: center;
    justify-content: center;
}

.gallery-nav button:disabled {
    background: #dcdcdc;
}

.gallery-nav button + button {
    border-top: 1px solid #c0c0c0;
}

.gallery-nav .more::before {
    content: "";
    width: 7px;
    height: 1px;
    margin-bottom: 2px;
    background: #6b6b6b;
}

.arrange {
    margin-right: 9px;
}

.big:disabled {
    color: #a0a0a0;
}

.g-draw .col {
    margin-left: 5px;
}

.g-edit .col {
    margin-left: 3px;
}

.collapse {
    align-self: flex-end;
    margin: 0 4px 0 auto;
    color: #666;
}

.collapse svg {
    stroke-width: 2;
}

/* Workspace */
.workspace {
    flex: 1;
    display: flex;
    min-height: 0;
}

.thumbs {
    flex: none;
    width: 159px;
    padding: 16px 19px 0 9px;
    border-right: 1px solid #bdbdbd;
}

.thumb {
    display: flex;
    align-items: flex-start;
    margin-bottom: 16px;
    font-size: 16px;
}

.thumb span {
    width: 15px;
    line-height: 12px;
}

.thumb svg {
    width: 113px;
    background: #fff;
    border: 1px solid #bbb;
    stroke: #aaa;
    stroke-dasharray: 4 1 3 1;
}

.thumb.active {
    color: #d0492b;
}

.thumb.active span {
    width: 13px;
}

.thumb.active svg {
    width: 117px;
    border: 4px solid #e3735c;
}

.canvas {
    flex: 1;
    display: flex;
    align-items: flex-start;
    min-width: 0;
    padding: 2px 1px 0 17px;
    border-right: 1px solid #bdbdbd;
    border-bottom: 1px solid #bdbdbd;
}

.slide {
    flex: 1;
    aspect-ratio: 855 / 482;
    margin: 26px 15px 0 0;
    padding: 112px 197px 0;
    background: #fff;
    border: 1px solid #c3c3c3;
    color: #222;
    font-size: 16px;
    line-height: 19px;
}

.quote {
    width: 414px;
    margin-left: 8px;
    text-align: justify;
}

.english {
    width: 452px;
    margin: 69px 0 30px 8px;
    font-family: "Open Sans", sans-serif;
    font-size: 15px;
}

/* Vertical scroll bar */
.scroll {
    flex: none;
    align-self: stretch;
    display: flex;
    flex-direction: column;
    width: 16px;
    padding-bottom: 20px;
}

.scroll button {
    display: flex;
    align-items: center;
    justify-content: center;
    height: 15px;
    background: #fff;
    border: 1px solid #bdbdbd;
}

.scroll .jump {
    height: 18px;
    background: none;
    border: none;
}

.scroll .arrow {
    border-width: 4px;
    border-bottom: none;
}

.scroll .arrow.up {
    border-top: none;
    border-bottom: 4px solid currentColor;
}

.jump svg {
    fill: #6b6b6b;
}

.track {
    flex: 1;
    background: #d9d9d9;
}

.handle {
    height: 50%;
    background: #fff;
    border: 1px solid #a6a6a6;
}

/* Design tools pane */
.pane {
    flex: none;
    display: flex;
    flex-direction: column;
    width: 293px;
    padding: 0 2px 5px 7px;
}

.pane-head {
    display: flex;
    align-items: center;
    gap: 31px;
    height: 41px;
    padding: 6px 11px 0 6px;
    color: #555;
}

.pane-head h1 {
    flex: 1;
    padding-top: 4px;
    color: #d0492b;
    font-size: 21px;
    line-height: 28px;
}

.pane-head svg {
    stroke: #666;
    stroke-width: 2;
}

.pane-body {
    flex: 1;
    display: flex;
    justify-content: space-between;
    min-height: 0;
    background: #fff;
    overflow: hidden;
}

.pane-content {
    padding: 14px 0 0 16px;
}

.pane h2 {
    height: 21px;
    color: #111;
    font-size: 12px;
    line-height: 20px;
}

.sets {
    display: grid;
    grid-template-columns: 84px 84px;
    gap: 7px 14px;
    margin-bottom: 7px;
}

.icons {
    display: grid;
    grid-template-columns: repeat(3, 24px);
    grid-auto-rows: 24px;
    column-gap: 6px;
}

.icons.pair {
    grid-template-columns: repeat(2, 24px);
}

.icons button {
    display: flex;
    align-items: center;
    justify-content: center;
    color: #edc3c1;
}

.icons svg {
    width: 14px;
    height: 14px;
    stroke: currentColor;
}

.icons .d {
    stroke-dasharray: 2 1;
}

.icons .live {
    color: #c8482d;
}

.options {
    display: grid;
    grid-template-columns: 92px 92px;
    grid-auto-rows: 32px;
    margin-bottom: 6px;
}

.options label {
    display: flex;
    align-items: center;
    gap: 5px;
    color: #aaa;
}

.options input {
    appearance: none;
    width: 18px;
    height: 18px;
    margin: 0;
    background: #f1f1f1;
}

.options input[type="radio"] {
    border: 2px solid #cfcfcf;
    border-radius: 50%;
}

.options input[type="radio"]:checked {
    background: radial-gradient(circle, #a3a3a3 5px, #f6f6f6 6px);
}

.options input[type="checkbox"]::before {
    content: "";
    display: block;
    width: 12px;
    height: 7px;
    margin: 4px 3px;
    border: solid #999;
    border-width: 0 0 2px 2px;
    transform: rotate(-45deg);
}

.pane-scroll {
    width: 4px;
    height: 77%;
    margin: 16px 2px 0 0;
    background: #e0e0e0;
}
```
